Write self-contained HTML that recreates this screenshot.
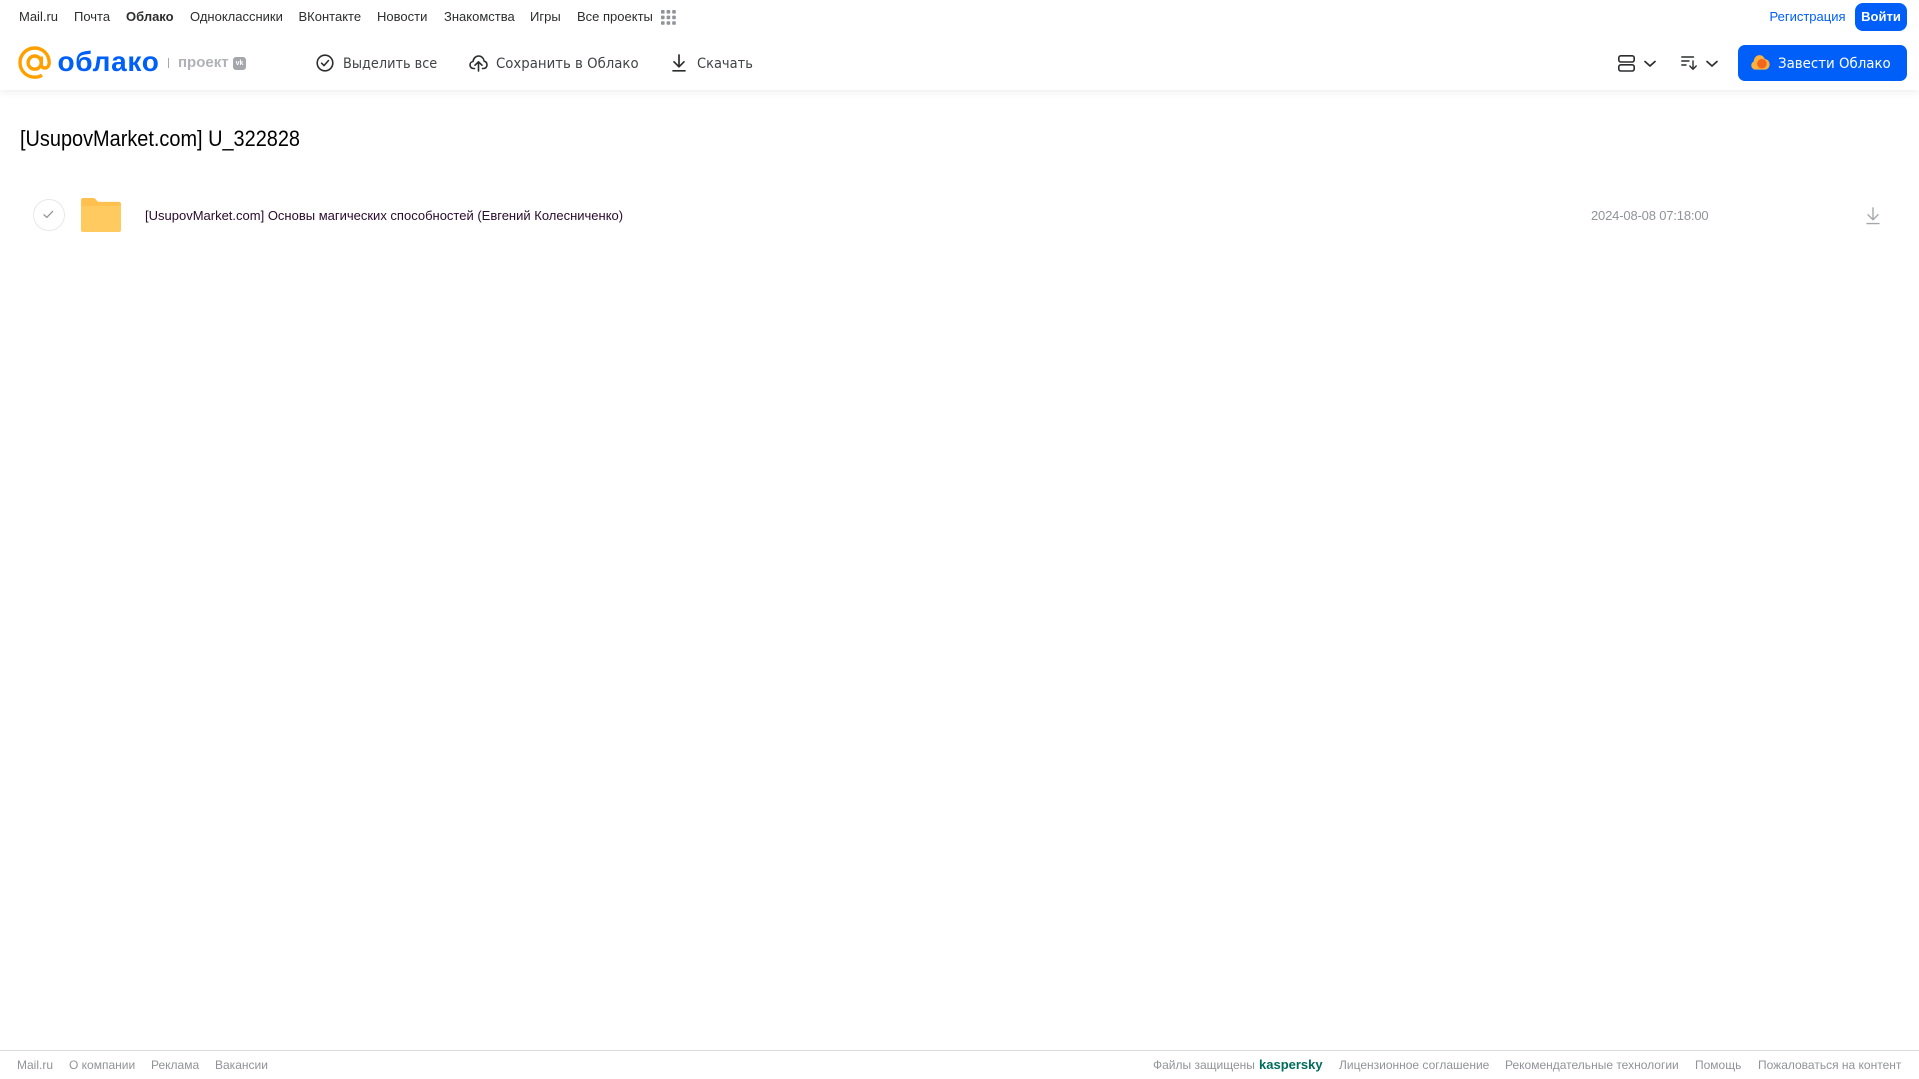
<!DOCTYPE html>
<html lang="ru">
<head>
<meta charset="utf-8">
<title>Облако</title>
<style>
html,body{margin:0;padding:0;background:#fff}
body{width:1919px;height:1079px;position:relative;overflow:hidden;font-family:"Liberation Sans",sans-serif}
.t{position:absolute;white-space:nowrap;line-height:16px}
.n{font-size:13px;color:#2c2d2e;top:9px}
.a{font-size:14px;color:#414347;top:55.5px;line-height:16px;font-family:"DejaVu Sans",sans-serif;transform-origin:left center}
.f{font-size:12px;color:#919399;top:1057px}
svg{position:absolute;overflow:visible}
</style>
</head>
<body>
<div style="position:absolute;left:0;top:0;width:1919px;height:90px;background:#fff;box-shadow:0 2px 8px rgba(0,0,0,.07)"></div>

<span class="t n" style="left:19px">Mail.ru</span>
<span class="t n" style="left:74px">Почта</span>
<span class="t n" style="left:126px;font-weight:bold">Облако</span>
<span class="t n" style="left:190px">Одноклассники</span>
<span class="t n" style="left:298.5px">ВКонтакте</span>
<span class="t n" style="left:377px">Новости</span>
<span class="t n" style="left:444px">Знакомства</span>
<span class="t n" style="left:530px">Игры</span>
<span class="t n" style="left:577px">Все проекты</span>
<svg style="left:661px;top:10px" width="15" height="15" viewBox="0 0 15 15" fill="#919399">
<rect x="0" y="0" width="3.6" height="3.6" rx=".8"/><rect x="5.6" y="0" width="3.6" height="3.6" rx=".8"/><rect x="11.2" y="0" width="3.6" height="3.6" rx=".8"/>
<rect x="0" y="5.6" width="3.6" height="3.6" rx=".8"/><rect x="5.6" y="5.6" width="3.6" height="3.6" rx=".8"/><rect x="11.2" y="5.6" width="3.6" height="3.6" rx=".8"/>
<rect x="0" y="11.2" width="3.6" height="3.6" rx=".8"/><rect x="5.6" y="11.2" width="3.6" height="3.6" rx=".8"/><rect x="11.2" y="11.2" width="3.6" height="3.6" rx=".8"/>
</svg>

<span class="t n" style="left:1769.5px;color:#005ff9">Регистрация</span>
<div style="position:absolute;left:1855px;top:3px;width:52px;height:28px;background:#005ff9;border-radius:8px;color:#fff;font-size:13px;font-weight:bold;text-align:center;line-height:28px">Войти</div>

<svg style="left:18px;top:46px" width="34" height="34" viewBox="0 0 34 34" fill="none" stroke="#ffa000" stroke-width="3.4">
<circle cx="16.7" cy="16.6" r="6.6"/>
<path d="M23.3 10.5V18.5C23.3 23.5 31.2 23.5 31.2 16.6C31.2 8.5 24.8 2 16.7 2C8.6 2 2 8.5 2 16.6C2 24.8 8.6 31.2 16.7 31.2C19.5 31.2 22 30.5 24 29.2"/>
</svg>
<span class="t" style="left:57.5px;top:44.5px;font-size:28px;line-height:34px;font-weight:bold;color:#005ff9;letter-spacing:.7px">облако</span>
<div style="position:absolute;left:168px;top:58px;width:1px;height:10px;background:#a5a7ad"></div>
<span class="t" style="left:178px;top:55px;font-size:15px;font-weight:bold;color:#b0b2b7">проект</span>
<div style="position:absolute;left:233px;top:57px;width:13px;height:13px;background:#a5a7ad;border-radius:3px;color:#fff;font-size:7px;font-weight:bold;line-height:13px;text-align:center">vk</div>

<svg style="left:316px;top:54px" width="18" height="18" viewBox="0 0 18 18" fill="none" stroke="#2c2d2e" stroke-width="1.6">
<circle cx="9" cy="9" r="7.8"/><path d="M5.6 9.2L8 11.6L12.4 6.6" stroke-linecap="round" stroke-linejoin="round"/>
</svg>
<span class="t a" style="left:343px;transform:scaleX(.92)">Выделить все</span>

<svg style="left:469px;top:54px" width="19" height="18" viewBox="0 0 19 18" fill="none" stroke="#2c2d2e" stroke-width="1.6" stroke-linecap="round" stroke-linejoin="round">
<path d="M5.5 14.5H4.5C2.5 14.5 1 13 1 11C1 9.2 2.3 7.7 4 7.5C4.5 4.2 6.8 2 9.7 2C12.5 2 14.7 4.2 15.2 7.2C17 7.6 18 9.2 18 11C18 13 16.5 14.5 14.5 14.5H13.5"/>
<path d="M9.5 17V8M6 11.2L9.5 7.8L13 11.2"/>
</svg>
<span class="t a" style="left:496px;transform:scaleX(.95)">Сохранить в Облако</span>

<svg style="left:671px;top:54px" width="16" height="18" viewBox="0 0 16 18" fill="none" stroke="#2c2d2e" stroke-width="1.7" stroke-linecap="round" stroke-linejoin="round">
<path d="M8 1V12.5M3 7.8L8 12.8L13 7.8M2 16.8H14"/>
</svg>
<span class="t a" style="left:697px;transform:scaleX(.93)">Скачать</span>

<svg style="left:1618px;top:55px" width="17" height="17" viewBox="0 0 17 17" fill="none" stroke="#2c2d2e" stroke-width="1.6">
<rect x=".8" y=".8" width="15.4" height="6.2" rx="2"/><rect x=".8" y="9.8" width="15.4" height="6.2" rx="2"/>
</svg>
<svg style="left:1644px;top:60px" width="12" height="8" viewBox="0 0 12 8" fill="none" stroke="#2c2d2e" stroke-width="1.7" stroke-linecap="round" stroke-linejoin="round"><path d="M1 1.5L6 6L11 1.5"/></svg>
<svg style="left:1681px;top:56px" width="16" height="14" viewBox="0 0 16 14" fill="none" stroke="#2c2d2e" stroke-width="1.4" stroke-linecap="round" stroke-linejoin="round">
<path d="M.8 1H12.5M.8 5H8M.8 9H5M12 5V13M8.8 10L12 13.2L15.2 10"/>
</svg>
<svg style="left:1706px;top:60px" width="12" height="8" viewBox="0 0 12 8" fill="none" stroke="#2c2d2e" stroke-width="1.7" stroke-linecap="round" stroke-linejoin="round"><path d="M1 1.5L6 6L11 1.5"/></svg>

<div style="position:absolute;left:1738px;top:45px;width:169px;height:36px;background:#005ff9;border-radius:7px"></div>
<svg style="left:1751px;top:54px" width="19" height="17" viewBox="0 0 20 17">
<path d="M5 16C2.4 16 .3 14 .3 11.5C.3 9.6 1.3 8.4 2.8 7.5C3.2 3.5 5.8 .8 9 .8C11.6 .8 13.6 2.6 14.5 5C17.4 5 19.6 7.4 19.6 10.5C19.6 13.6 17.4 16 14.5 16Z" fill="#ffb13d"/>
<circle cx="11.5" cy="9.8" r="5" fill="#f4651e"/>
</svg>
<span class="t" style="left:1778px;top:55.5px;font-size:14px;font-family:'DejaVu Sans',sans-serif;color:#fff;transform:scaleX(.955);transform-origin:left center">Завести Облако</span>

<span class="t" style="left:20px;top:126.5px;font-size:22px;line-height:24px;color:#000;transform:scaleX(.905);transform-origin:left center">[UsupovMarket.com] U_322828</span>

<div style="position:absolute;left:33px;top:199px;width:30px;height:30px;border:1px solid #e7e8ea;border-radius:50%"></div>
<svg style="left:43px;top:210px" width="11" height="9" viewBox="0 0 11 9" fill="none" stroke="#919399" stroke-width="1.3" stroke-linecap="round" stroke-linejoin="round"><path d="M1 4.8L3.8 7.4L9.6 1.4"/></svg>
<svg style="left:81px;top:198px" width="40" height="34" viewBox="0 0 41 35">
<path d="M2 0H12C14 0 15 1 16 2.5C16.8 3.6 17.6 4 19 4H39C40.2 4 41 4.8 41 6V33C41 34.2 40.2 35 39 35H2C.8 35 0 34.2 0 33V2C0 .8 .8 0 2 0Z" fill="#ffc04d"/>
<rect x="0" y="8" width="41" height="27" rx="2" fill="#ffca5f"/>
</svg>
<span class="t" style="left:145px;top:207.5px;font-size:13px;color:#2a0a2e">[UsupovMarket.com] Основы магических способностей (Евгений Колесниченко)</span>

<span class="t" style="left:1591px;top:207.5px;font-size:13px;letter-spacing:-.17px;color:#919399">2024-08-08 07:18:00</span>
<svg style="left:1866px;top:207px" width="14" height="18" viewBox="0 0 14 18" fill="none" stroke="#a5a7ad" stroke-width="1.4" stroke-linecap="round" stroke-linejoin="round"><path d="M7 1V12.5M2 7.8L7 12.8L12 7.8M1 16.6H13"/></svg>

<div style="position:absolute;left:0;top:1050px;width:1919px;height:1px;background:#d9dadc"></div>
<span class="t f" style="left:17px">Mail.ru</span>
<span class="t f" style="left:69px">О компании</span>
<span class="t f" style="left:151px">Реклама</span>
<span class="t f" style="left:215px">Вакансии</span>
<span class="t f" style="left:1153px">Файлы защищены</span>
<span class="t f" style="left:1259px;font-weight:bold;color:#006d5c;font-size:13px">kaspersky</span>
<span class="t f" style="left:1339px">Лицензионное соглашение</span>
<span class="t f" style="left:1505px">Рекомендательные технологии</span>
<span class="t f" style="left:1695px">Помощь</span>
<span class="t f" style="left:1758px">Пожаловаться на контент</span>
</body>
</html>
